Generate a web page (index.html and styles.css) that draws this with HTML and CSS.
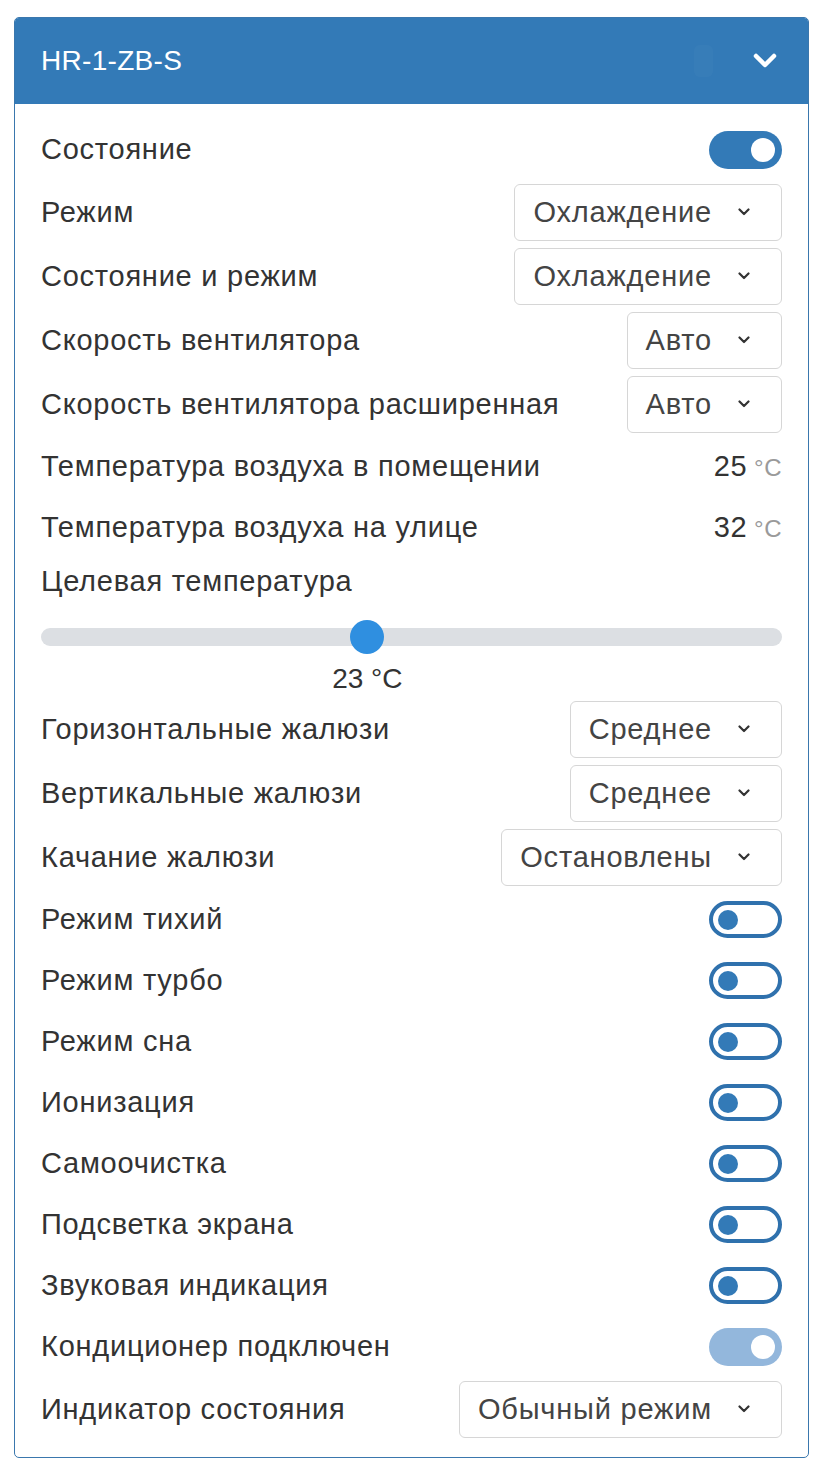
FILE: index.html
```html
<!DOCTYPE html>
<html lang="ru">
<head>
<meta charset="utf-8">
<title>HR-1-ZB-S</title>
<link rel="stylesheet" href="styles.css">
</head>
<body>
<div class="card">
  <div class="card-header">
    <span class="title">HR-1-ZB-S</span>
    <span class="ghost"></span>
    <svg class="hdr-chev" width="24" height="16" viewBox="0 0 24 16"><path d="M3 3 L12 12 L21 3" fill="none" stroke="#fff" stroke-width="4.5" stroke-linecap="round" stroke-linejoin="round"/></svg>
  </div>
  <div class="card-body">
    <div class="row row-line"><span class="label">Состояние</span><span class="switch on"></span></div>
    <div class="row row-sel"><span class="label">Режим</span><div class="select"><span class="sel-text">Охлаждение</span><svg class="sel-chev" width="12" height="8" viewBox="0 0 12 8"><path d="M1.5 1.5 L6 6 L10.5 1.5" fill="none" stroke="#333" stroke-width="2.2" stroke-linecap="round" stroke-linejoin="round"/></svg></div></div>
    <div class="row row-sel"><span class="label">Состояние и режим</span><div class="select"><span class="sel-text">Охлаждение</span><svg class="sel-chev" width="12" height="8" viewBox="0 0 12 8"><path d="M1.5 1.5 L6 6 L10.5 1.5" fill="none" stroke="#333" stroke-width="2.2" stroke-linecap="round" stroke-linejoin="round"/></svg></div></div>
    <div class="row row-sel"><span class="label">Скорость вентилятора</span><div class="select"><span class="sel-text">Авто</span><svg class="sel-chev" width="12" height="8" viewBox="0 0 12 8"><path d="M1.5 1.5 L6 6 L10.5 1.5" fill="none" stroke="#333" stroke-width="2.2" stroke-linecap="round" stroke-linejoin="round"/></svg></div></div>
    <div class="row row-sel"><span class="label">Скорость вентилятора расширенная</span><div class="select"><span class="sel-text">Авто</span><svg class="sel-chev" width="12" height="8" viewBox="0 0 12 8"><path d="M1.5 1.5 L6 6 L10.5 1.5" fill="none" stroke="#333" stroke-width="2.2" stroke-linecap="round" stroke-linejoin="round"/></svg></div></div>
    <div class="row row-line"><span class="label">Температура воздуха в помещении</span><span class="temp"><span class="temp-num">25</span><span class="temp-unit">°C</span></span></div>
    <div class="row row-line"><span class="label">Температура воздуха на улице</span><span class="temp"><span class="temp-num">32</span><span class="temp-unit">°C</span></span></div>
    <div class="target">
      <div class="target-label">Целевая температура</div>
      <div class="track">
        <span class="thumb" style="left: calc((100% - 34px) * 0.4375);"></span>
      </div>
      <div class="slider-value"><span class="slider-num" style="margin-left: calc((100% - 34px) * 0.4375 + 17px);">23 °C</span></div>
    </div>
    <div class="row row-sel"><span class="label">Горизонтальные жалюзи</span><div class="select"><span class="sel-text">Среднее</span><svg class="sel-chev" width="12" height="8" viewBox="0 0 12 8"><path d="M1.5 1.5 L6 6 L10.5 1.5" fill="none" stroke="#333" stroke-width="2.2" stroke-linecap="round" stroke-linejoin="round"/></svg></div></div>
    <div class="row row-sel"><span class="label">Вертикальные жалюзи</span><div class="select"><span class="sel-text">Среднее</span><svg class="sel-chev" width="12" height="8" viewBox="0 0 12 8"><path d="M1.5 1.5 L6 6 L10.5 1.5" fill="none" stroke="#333" stroke-width="2.2" stroke-linecap="round" stroke-linejoin="round"/></svg></div></div>
    <div class="row row-sel"><span class="label">Качание жалюзи</span><div class="select"><span class="sel-text">Остановлены</span><svg class="sel-chev" width="12" height="8" viewBox="0 0 12 8"><path d="M1.5 1.5 L6 6 L10.5 1.5" fill="none" stroke="#333" stroke-width="2.2" stroke-linecap="round" stroke-linejoin="round"/></svg></div></div>
    <div class="row row-line"><span class="label">Режим тихий</span><span class="switch off"></span></div>
    <div class="row row-line"><span class="label">Режим турбо</span><span class="switch off"></span></div>
    <div class="row row-line"><span class="label">Режим сна</span><span class="switch off"></span></div>
    <div class="row row-line"><span class="label">Ионизация</span><span class="switch off"></span></div>
    <div class="row row-line"><span class="label">Самоочистка</span><span class="switch off"></span></div>
    <div class="row row-line"><span class="label">Подсветка экрана</span><span class="switch off"></span></div>
    <div class="row row-line"><span class="label">Звуковая индикация</span><span class="switch off"></span></div>
    <div class="row row-line"><span class="label">Кондиционер подключен</span><span class="switch on disabled"></span></div>
    <div class="row row-sel"><span class="label">Индикатор состояния</span><div class="select"><span class="sel-text">Обычный режим</span><svg class="sel-chev" width="12" height="8" viewBox="0 0 12 8"><path d="M1.5 1.5 L6 6 L10.5 1.5" fill="none" stroke="#333" stroke-width="2.2" stroke-linecap="round" stroke-linejoin="round"/></svg></div></div>
  </div>
</div>
</body>
</html>
```

FILE: styles.css
```css
html, body {
  margin: 0;
  background: #ffffff;
}

body {
  padding: 17px 12px 16px 14px;
  font-family: "Liberation Sans", Arial, sans-serif;
  color: #333333;
}

.card {
  width: 795px;
  box-sizing: border-box;
  border: 1px solid #3a77ad;
  border-radius: 5px;
  overflow: hidden;
  background: #ffffff;
}

.card-header {
  background: #337ab7;
  height: 86px;
  display: flex;
  align-items: center;
  padding: 0 31px 0 26px;
  color: #ffffff;
}

.title {
  font-size: 28px;
  letter-spacing: 0.3px;
}

.ghost {
  margin-left: auto;
  margin-right: 40px;
  width: 19px;
  height: 32px;
  border-radius: 6px;
  background: rgba(255, 255, 255, 0.025);
}

.hdr-chev {
  display: block;
}

.card-body {
  padding: 19px 26px 20px 26px;
  display: flex;
  flex-direction: column;
  gap: 8px;
}

.row {
  display: flex;
  align-items: center;
  justify-content: space-between;
}

.row-line {
  height: 53px;
}

.row-sel {
  height: 56px;
}

.label {
  font-size: 29px;
  letter-spacing: 0.75px;
  white-space: nowrap;
}

.select {
  box-sizing: border-box;
  height: 57px;
  border: 1px solid #d6d6d6;
  border-radius: 6px;
  display: flex;
  align-items: center;
  padding: 0 31px 0 18px;
  color: #444444;
}

.sel-text {
  font-size: 29px;
  letter-spacing: 0.8px;
  white-space: nowrap;
}

.sel-chev {
  display: block;
  margin-left: 26px;
}

.switch {
  position: relative;
  box-sizing: border-box;
  width: 73px;
  height: 38px;
  border-radius: 19px;
  flex: none;
}

.switch.on {
  background: #337ab7;
}

.switch.on::after {
  content: "";
  position: absolute;
  right: 7px;
  top: 7px;
  width: 24px;
  height: 24px;
  border-radius: 50%;
  background: #ffffff;
}

.switch.on.disabled {
  background: #93b7dc;
}

.switch.off {
  height: 37px;
  border: 4px solid #2f71ad;
  background: #ffffff;
}

.switch.off::after {
  content: "";
  position: absolute;
  left: 5px;
  top: 4.5px;
  width: 20px;
  height: 20px;
  border-radius: 50%;
  background: #337ab7;
}

.temp {
  display: flex;
  align-items: baseline;
  white-space: nowrap;
}

.temp-num {
  font-size: 29px;
  letter-spacing: 0.5px;
  color: #333333;
}

.temp-unit {
  font-size: 24px;
  letter-spacing: 0.5px;
  color: #9a9a9a;
  margin-left: 7px;
}

.target {
  height: 131px;
  display: flex;
  flex-direction: column;
}

.target-label {
  height: 38px;
  line-height: 38px;
  font-size: 29px;
  letter-spacing: 0.75px;
  white-space: nowrap;
}

.track {
  position: relative;
  margin-top: 28px;
  height: 18px;
  border-radius: 9px;
  background: #dcdfe3;
}

.thumb {
  position: absolute;
  top: -8px;
  width: 34px;
  height: 34px;
  border-radius: 50%;
  background: #2f8fe0;
}

.slider-value {
  margin-top: 18px;
  height: 29px;
  line-height: 29px;
}

.slider-num {
  display: inline-block;
  transform: translateX(-50%);
  font-size: 28px;
  white-space: nowrap;
}
```
